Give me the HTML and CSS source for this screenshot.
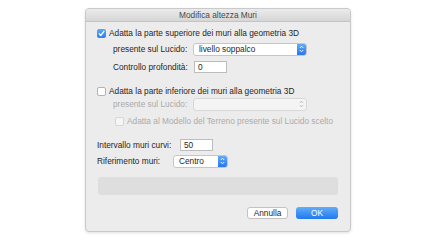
FILE: index.html
```html
<!DOCTYPE html>
<html lang="it">
<head>
  <meta charset="UTF-8">
  <title>Modifica altezza Muri</title>
  <link rel="stylesheet" href="styles.css">
</head>
<body>
  <!-- Finestra di dialogo -->
  <div class="dialog">
    <div class="titlebar">Modifica altezza Muri</div>
    <div class="content">
      <!-- Parte superiore -->
      <div class="row">
        <span class="check checked">
          <svg width="9" height="9" viewBox="0 0 9 9"><path d="M2.2 4.8 L3.8 6.5 L6.9 2.3" fill="none" stroke="#fff" stroke-width="1.3" stroke-linecap="round" stroke-linejoin="round"/></svg>
        </span>
        <span class="label">Adatta la parte superiore dei muri alla geometria 3D</span>
      </div>
      <div class="row row-2 indent">
        <span class="label label-lucido">presente sul Lucido:</span>
        <div class="select select-wide">
          <span class="select-text">livello soppalco</span>
          <span class="select-arrow">
            <svg width="5" height="8" viewBox="0 0 5 8"><path d="M0.8 3 L2.5 1.2 L4.2 3 M0.8 5 L2.5 6.8 L4.2 5" fill="none" stroke="#fff" stroke-width="0.9"/></svg>
          </span>
        </div>
      </div>
      <div class="row row-3 indent">
        <span class="label label-depth">Controllo profondità:</span>
        <div class="field field-depth">0</div>
      </div>
      <!-- Parte inferiore -->
      <div class="row row-4">
        <span class="check"></span>
        <span class="label">Adatta la parte inferiore dei muri alla geometria 3D</span>
      </div>
      <div class="row row-5 indent disabled">
        <span class="label label-lucido">presente sul Lucido:</span>
        <div class="select select-wide select-off">
          <span class="select-text"></span>
          <span class="select-arrow">
            <svg width="5" height="8" viewBox="0 0 5 8"><path d="M0.8 3 L2.5 1.2 L4.2 3 M0.8 5 L2.5 6.8 L4.2 5" fill="none" stroke="#b5b5b5" stroke-width="0.9"/></svg>
          </span>
        </div>
      </div>
      <div class="row row-6 indent-2 disabled">
        <span class="check check-off"></span>
        <span class="label">Adatta al Modello del Terreno presente sul Lucido scelto</span>
      </div>
      <!-- Altri parametri -->
      <div class="row row-7">
        <span class="label label-curvi">Intervallo muri curvi:</span>
        <div class="field field-curvi">50</div>
      </div>
      <div class="row row-8">
        <span class="label label-rif">Riferimento muri:</span>
        <div class="select select-small">
          <span class="select-text">Centro</span>
          <span class="select-arrow">
            <svg width="5" height="8" viewBox="0 0 5 8"><path d="M0.8 3 L2.5 1.2 L4.2 3 M0.8 5 L2.5 6.8 L4.2 5" fill="none" stroke="#fff" stroke-width="0.9"/></svg>
          </span>
        </div>
      </div>
      <div class="info-box"></div>
      <div class="buttons">
        <button class="btn">Annulla</button>
        <button class="btn btn-ok">OK</button>
      </div>
    </div>
  </div>
</body>
</html>
```

FILE: styles.css
```css
* {
  box-sizing: border-box;
  margin: 0;
  padding: 0;
}
body {
  font-family: "Liberation Sans", Arial, sans-serif;
  font-size: 8.3px;
  color: #262626;
  background-color: #fff;
  width: 432px;
  height: 242px;
  overflow: hidden;
}
.dialog {
  width: 266px;
  height: 224px;
  margin: 8px 0 0 85px;
  background-color: #ececec;
  border: 1px solid #c9c9c9;
  border-radius: 4px;
  box-shadow: 0 1px 3px rgba(0, 0, 0, 0.12);
  overflow: hidden;
}
.titlebar {
  height: 13px;
  line-height: 13px;
  text-align: center;
  color: #4a4a4a;
  background: linear-gradient(#ebebeb, #d6d6d6);
  border-bottom: 1px solid #c4c4c4;
}
.content {
  padding: 5px 12px 0 11px;
}
.row {
  display: flex;
  align-items: center;
  height: 12px;
  white-space: nowrap;
}
.row-2 { margin-top: 4px; }
.row-3 { margin-top: 6px; }
.row-4 { margin-top: 12px; }
.row-5 { margin-top: 1px; }
.row-6 { margin-top: 5px; }
.row-7 { margin-top: 12px; }
.row-8 { margin-top: 4px; }
.indent {
  padding-left: 16px;
}
.indent-2 {
  padding-left: 18px;
}
.disabled {
  color: #ababab;
}
/* Caselle di controllo */
.check {
  width: 9px;
  height: 9px;
  margin-right: 3px;
  border: 1px solid #b3b3b3;
  border-radius: 2px;
  background-color: #fff;
  display: flex;
}
.check.checked {
  border: none;
  background: linear-gradient(#5aa8f8, #2a7ef0);
}
.check-off {
  border-color: #d6d6d6;
  background-color: #f6f6f6;
}
/* Etichette */
.label-lucido { width: 80px; }
.label-depth { width: 81px; }
.label-curvi { width: 83px; }
.label-rif { width: 76px; }
/* Menu a comparsa */
.select {
  display: flex;
  align-items: stretch;
  height: 13px;
  background-color: #fff;
  border: 1px solid #c6c6c6;
  border-radius: 3px;
  overflow: hidden;
}
.select-wide { width: 114px; }
.select-small { width: 55px; }
.select-text {
  flex: 1;
  line-height: 11px;
  padding-left: 5px;
  color: #262626;
}
.select-arrow {
  width: 9px;
  display: flex;
  align-items: center;
  justify-content: center;
  background: linear-gradient(#5fabf8, #2677ee);
}
.select-off {
  background-color: #f4f4f4;
  border-color: #d8d8d8;
}
.select-off .select-arrow {
  background: none;
}
/* Campi di testo */
.field {
  height: 12px;
  line-height: 11px;
  padding-left: 3px;
  background-color: #fff;
  border: 1px solid #bdbdbd;
}
.field-depth { width: 33px; }
.field-curvi { width: 33px; }
.info-box {
  height: 18px;
  margin-top: 10px;
  margin-left: 1px;
  background-color: #dedede;
  border-radius: 3px;
}
.buttons {
  display: flex;
  justify-content: flex-end;
  gap: 8px;
  margin-top: 12px;
}
.btn {
  font-family: inherit;
  font-size: 8.3px;
  height: 12px;
  width: 41px;
  color: #262626;
  background-color: #fff;
  border: 1px solid #c3c3c3;
  border-radius: 3px;
}
.btn-ok {
  width: 42px;
  color: #fff;
  border: none;
  background: linear-gradient(#62aef9, #1f78ef);
}
```
